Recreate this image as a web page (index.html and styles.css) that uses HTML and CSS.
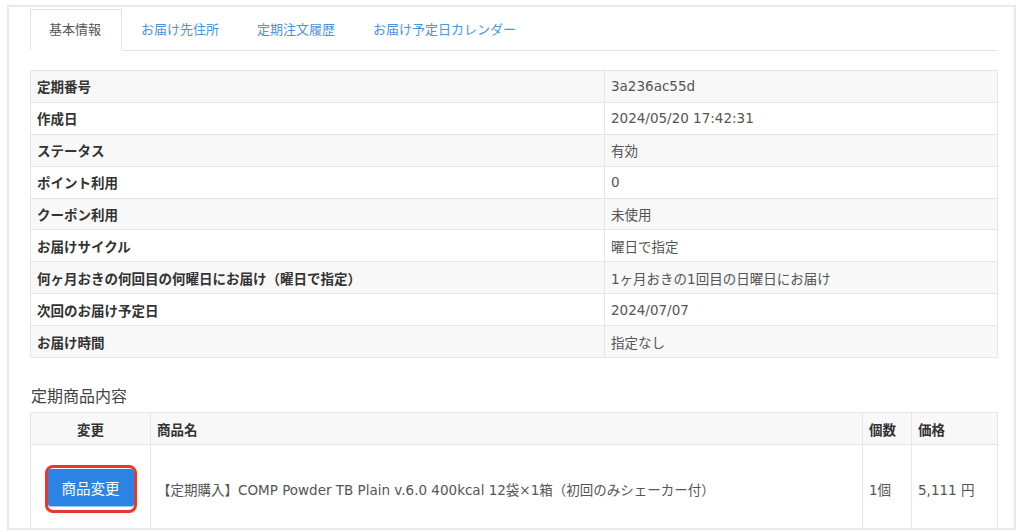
FILE: index.html
```html
<!DOCTYPE html>
<html lang="ja">

<head>
    <meta charset="UTF-8">
    <meta name="viewport" content="width=device-width, initial-scale=1.0">
    <title>定期購入詳細</title>
    <link rel="stylesheet" href="styles.css">
</head>

<body>
    <div class="panel">
        <ul class="tabs">
            <li class="tab active"><a href="#">基本情報</a></li>
            <li class="tab"><a href="#">お届け先住所</a></li>
            <li class="tab"><a href="#">定期注文履歴</a></li>
            <li class="tab"><a href="#">お届け予定日カレンダー</a></li>
        </ul>

        <table class="info">
            <tr>
                <th>定期番号</th>
                <td>3a236ac55d</td>
            </tr>
            <tr>
                <th>作成日</th>
                <td>2024/05/20 17:42:31</td>
            </tr>
            <tr>
                <th>ステータス</th>
                <td>有効</td>
            </tr>
            <tr>
                <th>ポイント利用</th>
                <td>0</td>
            </tr>
            <tr>
                <th>クーポン利用</th>
                <td>未使用</td>
            </tr>
            <tr>
                <th>お届けサイクル</th>
                <td>曜日で指定</td>
            </tr>
            <tr>
                <th>何ヶ月おきの何回目の何曜日にお届け（曜日で指定）</th>
                <td>1ヶ月おきの1回目の日曜日にお届け</td>
            </tr>
            <tr>
                <th>次回のお届け予定日</th>
                <td>2024/07/07</td>
            </tr>
            <tr>
                <th>お届け時間</th>
                <td>指定なし</td>
            </tr>
        </table>

        <h3 class="section-title">定期商品内容</h3>
        <table class="items">
            <tr>
                <th class="col-change">変更</th>
                <th class="col-name">商品名</th>
                <th class="col-qty">個数</th>
                <th class="col-price">価格</th>
            </tr>
            <tr>
                <td class="col-change">
                    <span class="highlight"><button class="btn-change">商品変更</button></span>
                </td>
                <td>【定期購入】COMP Powder TB Plain v.6.0 400kcal 12袋×1箱（初回のみシェーカー付）</td>
                <td>1個</td>
                <td>5,111 円</td>
            </tr>
        </table>
    </div>
</body>

</html>
```

FILE: styles.css
```css
html,
body {
    margin: 0;
    padding: 0;
    background-color: #fff;
    font-family: "DejaVu Sans", "Noto Sans CJK JP", sans-serif;
    font-size: 13px;
    color: #333;
}

.panel {
    box-sizing: border-box;
    width: 1009px;
    height: 525px;
    margin: 5px 0 0 7px;
    padding: 2px 16px 0 21px;
    border: 2px solid #e9e9e9;
    overflow: hidden;
}

.tabs {
    display: flex;
    list-style: none;
    margin: 0;
    padding: 0;
    border-bottom: 1px solid #e3e3e3;
}

.tab {
    margin-bottom: -1px;
}

.tab a {
    display: block;
    padding: 10px 18px;
    line-height: 20px;
    border: 1px solid transparent;
    color: #4a95e0;
    text-decoration: none;
}

.tab.active a {
    color: #555;
    background-color: #fff;
    border-color: #e3e3e3;
    border-bottom-color: #fff;
    padding-right: 20px;
}

table {
    width: 100%;
    border-collapse: collapse;
    border: 1px solid #e6e6e6;
    font-size: 13.5px;
}

.info {
    margin-top: 19px;
}

.info th,
.info td {
    height: 30.9px;
    padding: 0 6px;
    border-top: 1px solid #e6e6e6;
    text-align: left;
    vertical-align: middle;
}

.info th {
    width: 561px;
    font-weight: bold;
    color: #333;
}

.info td {
    border-left: 1px solid #e6e6e6;
    color: #555;
}

.info tr:nth-child(odd) {
    background-color: #f8f8f8;
}

.section-title {
    margin: 28px 0 4px 1px;
    font-size: 16px;
    line-height: 22px;
    font-weight: normal;
    color: #444;
}

.items th,
.items td {
    border: 1px solid #e6e6e6;
    padding: 0 6px;
    text-align: left;
    vertical-align: middle;
}

.items th {
    height: 31px;
    background-color: #f8f8f8;
    font-weight: bold;
    color: #333;
}

.items td {
    height: 88px;
    color: #555;
}

.items .col-change {
    width: 107px;
    text-align: center;
}

.items .col-qty {
    width: 36px;
}

.items .col-price {
    width: 73px;
}

.highlight {
    display: inline-block;
    padding: 1px 0 3px 0;
    border: 3px solid #e8372d;
    border-radius: 8px;
    line-height: 0;
}

.btn-change {
    width: 86px;
    height: 38px;
    margin: 0;
    padding: 0;
    border: none;
    border-bottom: 1px solid #9cc6f2;
    border-radius: 3px;
    background-color: #2c84e2;
    color: #fff;
    font-family: "Noto Sans CJK JP", sans-serif;
    font-size: 14.5px;
    line-height: 36px;
}
```
